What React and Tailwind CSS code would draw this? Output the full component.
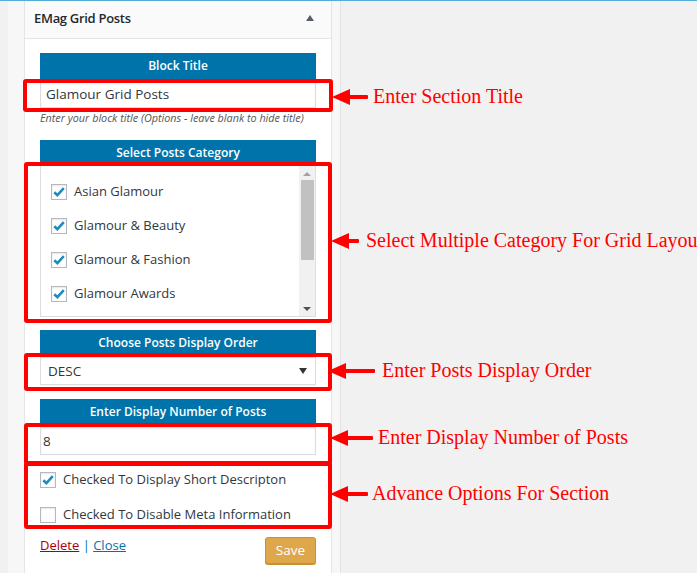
import React from 'react';

const ui = { fontFamily: '"Open Sans", "Liberation Sans", sans-serif' };
const serif = { fontFamily: '"Liberation Serif", "Times New Roman", serif' };

const Check = ({ checked }) => (
    <span className="relative flex h-4 w-4 shrink-0 items-center justify-center border border-[#b4b9be] bg-white shadow-[inset_0_1px_2px_rgba(0,0,0,0.1)]">
        {checked && (
            <svg className="h-[14px] w-[14px]" viewBox="0 0 14 14">
                <path d="M2.3 7.2 L5.4 10.2 L11.8 3.2" fill="none" stroke="#1e8cbe" strokeWidth="2.6" />
            </svg>
        )}
    </span>
);

const Bar = ({ children, className = '' }) => (
    <div className={`flex h-[26px] items-center justify-center bg-[#0073aa] text-[12px] font-semibold text-white ${className}`}>
        {children}
    </div>
);

const categories = ['Asian Glamour', 'Glamour & Beauty', 'Glamour & Fashion', 'Glamour Awards'];

const notes = [
    { top: 96, tip: 332, end: 368, text: 'Enter Section Title', left: 373 },
    { top: 240, tip: 331, end: 359, text: 'Select Multiple Category For Grid Layout', left: 366 },
    { top: 370, tip: 328, end: 375, text: 'Enter Posts Display Order', left: 382 },
    { top: 437, tip: 330, end: 373, text: 'Enter Display Number of Posts', left: 378 },
    { top: 493, tip: 330, end: 368, text: 'Advance Options For Section', left: 372 },
];

const boxes = [
    'left-[23px] top-[78px] w-[310px] h-[33px]',
    'left-[24px] top-[161px] w-[308px] h-[161px]',
    'left-[24px] top-[352px] w-[308px] h-[38px]',
    'left-[24px] top-[422px] w-[308px] h-[42px]',
    'left-[24px] top-[461px] w-[308px] h-[67px]',
];

export default function App() {
    return (
        <div className="relative h-[573px] w-[697px] overflow-hidden border-t border-[#52acd6] bg-[#f1f1f1]" style={ui}>
            <div className="flex h-full">
                <div className="w-2 shrink-0" />
                <div className="w-[333px] shrink-0 border-r border-[#e2e2e2] bg-[#f7f7f7] pl-4 pr-2">
                    <div className="h-full border-x border-[#e5e5e5] bg-white">
                        <div className="flex h-[38px] items-center justify-between border-b border-[#e5e5e5] bg-[#fafafa] pl-[9px] pr-[17px]">
                            <span className="-mt-[1px] text-[13px] font-semibold tracking-[-0.3px] text-[#23282d]">EMag Grid Posts</span>
                            <span className="-mt-[3px] h-0 w-0 border-x-[4px] border-b-[6px] border-x-transparent border-b-[#555d66]" />
                        </div>

                        <div className="px-[15px] pt-[14px] text-[#32373c]">
                            <Bar>Block Title</Bar>
                            <div className="mt-[1px] flex h-7 items-center border border-[#ddd] px-[5px] text-[13.5px] shadow-[inset_0_1px_2px_rgba(0,0,0,0.07)]">
                                Glamour Grid Posts
                            </div>
                            <p className="mt-[2px] text-[10.8px] italic leading-4 text-[#555]">
                                Enter your block title (Options - leave blank to hide title)
                            </p>

                            <Bar className="mt-[14px]">Select Posts Category</Bar>
                            <div className="-mt-[1px] flex h-[152px] border border-[#ddd]">
                                <div className="flex-1 pl-[10px] pt-[9px]">
                                    {categories.map((c) => (
                                        <div key={c} className="flex h-[34px] items-center gap-[7px] text-[13px]">
                                            <Check checked />
                                            <span>{c}</span>
                                        </div>
                                    ))}
                                </div>
                                <div className="flex w-[16px] flex-col items-center bg-[#f1f1f1] pb-[5px] pt-[6px]">
                                    <span className="h-0 w-0 border-x-[4px] border-b-[4px] border-x-transparent border-b-[#a3a3a3]" />
                                    <div className="mt-[4px] h-[80px] w-[13px] bg-[#c1c1c1]" />
                                    <div className="flex-1" />
                                    <span className="h-0 w-0 border-x-[4px] border-t-[4px] border-x-transparent border-t-[#505050]" />
                                </div>
                            </div>

                            <Bar className="mt-[13px]">Choose Posts Display Order</Bar>
                            <div className="mt-[1px] flex h-7 items-center justify-between border border-[#ddd] pl-[7px] pr-[8px] text-[13.5px] shadow-[0_1px_1px_rgba(0,0,0,0.04)]">
                                <span>DESC</span>
                                <span className="h-0 w-0 border-x-[4px] border-t-[6px] border-x-transparent border-t-[#333]" />
                            </div>

                            <Bar className="mt-[14px]">Enter Display Number of Posts</Bar>
                            <div className="mt-[2px] flex h-7 items-center border border-[#ddd] px-[2px] text-[13.5px] shadow-[inset_0_1px_2px_rgba(0,0,0,0.07)]">
                                8
                            </div>

                            <div className="mt-[17px] flex flex-col gap-[19px] text-[13px]">
                                <label className="flex h-4 items-center gap-[7px]">
                                    <Check checked />
                                    <span>Checked To Display Short Descripton</span>
                                </label>
                                <label className="flex h-4 items-center gap-[7px]">
                                    <Check />
                                    <span>Checked To Disable Meta Information</span>
                                </label>
                            </div>

                            <div className="mt-[14px] flex items-center justify-between">
                                <div className="-mt-[10px] text-[13px]">
                                    <a className="text-[#a00] underline">Delete</a>
                                    <span className="text-[#0073aa]"> | </span>
                                    <a className="text-[#0073aa] underline">Close</a>
                                </div>
                                <button className="h-[27px] rounded-[3px] border border-[#c8922f] bg-[#dfa74c] px-[10px] text-[13.5px] text-white shadow-[0_1px_0_#c8922f]">
                                    Save
                                </button>
                            </div>
                        </div>
                    </div>
                </div>
            </div>

            {boxes.map((b) => (
                <div key={b} className={`absolute ${b} rounded-[3px] border-4 border-[#ff0000]`} />
            ))}

            {notes.map((n) => (
                <div key={n.text}>
                    <svg
                        className="absolute"
                        style={{ left: n.tip, top: n.top - 9, width: n.end - n.tip, height: 18 }}
                        viewBox={`0 0 ${n.end - n.tip} 18`}
                    >
                        <polygon points="0,9 18,1 18,17" fill="#ff0000" />
                        <rect x="16" y="7" width={n.end - n.tip - 16} height="4" rx="1" fill="#ff0000" />
                    </svg>
                    <div
                        className="absolute whitespace-nowrap text-[20px] leading-[22px] text-[#ff0000]"
                        style={{ ...serif, left: n.left, top: n.top - 12 }}
                    >
                        {n.text}
                    </div>
                </div>
            ))}
        </div>
    );
}
